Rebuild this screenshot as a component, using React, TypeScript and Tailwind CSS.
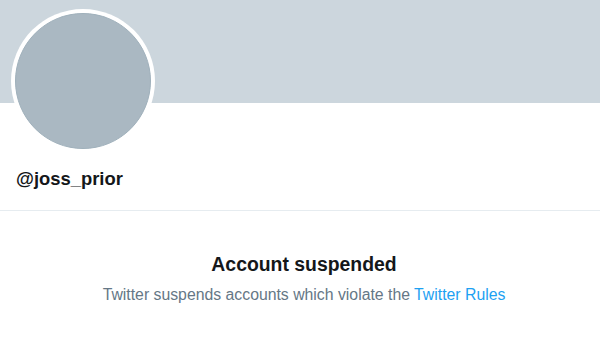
export default function App() {
  return (
    <div className="w-[600px] h-[355px] bg-white overflow-hidden" style={{ fontFamily: '"Liberation Sans", Arial, sans-serif' }}>
      <div className="h-[103px] bg-[#ccd6dd]" />
      <div className="px-[11px]">
        <div className="-mt-[94px] w-[144px] h-[144px] rounded-full bg-white p-[4px]">
          <div className="w-full h-full rounded-full bg-[#aab8c2] border border-[#9fb0bb]" />
        </div>
        <div className="mt-[14px] pl-[5px] text-[18.4px] font-bold text-[#14171a] leading-[24px]">@joss_prior</div>
      </div>
      <div className="mt-[19px] h-px bg-[#e6ecf0]" />
      <div className="mt-[41px] pl-[8px] flex flex-col items-center">
        <div className="text-[19.4px] font-bold text-[#14171a] leading-[24px]">Account suspended</div>
        <div className="mt-[9px] text-[15.8px] text-[#657786] leading-[20px]">
          Twitter suspends accounts which violate the <span className="text-[#1da1f2]">Twitter Rules</span>
        </div>
      </div>
    </div>
  );
}
